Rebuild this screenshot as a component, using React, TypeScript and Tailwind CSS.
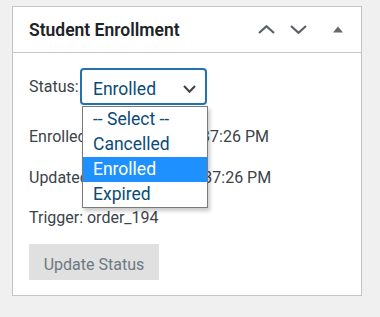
import React from "react";

function ChevronUp() {
  return (
    <svg width="17" height="9" viewBox="0 0 17 9" className="block">
      <polyline points="1,8 8.5,1.2 16,8" fill="none" stroke="#5c6166" strokeWidth="2.2" />
    </svg>
  );
}

function ChevronDown({ w = 17, h = 9, color = "#5c6166", sw = 2.2 }: { w?: number; h?: number; color?: string; sw?: number }) {
  return (
    <svg width={w} height={h} viewBox={`0 0 ${w} ${h}`} className="block">
      <polyline points={`1,1 ${w / 2},${h - 1.2} ${w - 1},1`} fill="none" stroke={color} strokeWidth={sw} />
    </svg>
  );
}

function Triangle() {
  return (
    <svg width="10" height="7" viewBox="0 0 10 7" className="block">
      <polygon points="0,6.5 5,0.5 10,6.5" fill="#646970" />
    </svg>
  );
}

const options = ["-- Select --", "Cancelled", "Enrolled", "Expired"];

export default function App() {
  return (
    <div className="w-[380px] h-[317px] bg-[#f0f0f1] pt-[6px] pl-[12px] font-['Roboto',sans-serif]">
      <div className="w-[350px] h-[290px] bg-white border border-[#c3c4c7] flex flex-col">
        <div className="h-[46px] border-b border-[#c3c4c7] flex items-center pl-[16px] pr-[18px]">
          <h2 className="text-[17.5px] leading-[24px] font-semibold text-[#1d2327] pt-[1px]">Student Enrollment</h2>
          <div className="ml-auto flex items-center">
            <ChevronUp />
            <div className="ml-[15px]">
              <ChevronDown />
            </div>
            <div className="ml-[26px] -mt-[1px]">
              <Triangle />
            </div>
          </div>
        </div>
        <div className="pl-[16px] text-[16px] leading-[24px] text-[#3c434a]">
          <div className="mt-[15px] flex items-center">
            <span className="w-[51px] shrink-0 whitespace-nowrap pt-[1px]">Status:</span>
            <div className="relative">
              <div className="w-[127px] h-[37px] rounded-[4px] border-2 border-[#2271b1] flex items-center pl-[11px] pr-[9px] pt-[5px] text-[17.5px] text-[#0a4b78]">
                <span>Enrolled</span>
                <div className="ml-auto">
                  <ChevronDown w={13} h={8} color="#3c434a" sw={2} />
                </div>
              </div>
              <div className="absolute left-[2px] top-[38px] w-[126px] border border-[#7a7a7a] bg-white shadow-[2px_3px_4px_rgba(0,0,0,0.22)] z-10">
                {options.map((o) => (
                  <div
                    key={o}
                    className={
                      "h-[25px] flex items-center pl-[10px] text-[17.5px] leading-[25px] " +
                      (o === "Enrolled" ? "bg-[#1e90ff] text-white" : "text-[#0a4b78]")
                    }
                  >
                    {o}
                  </div>
                ))}
              </div>
            </div>
          </div>
          <p className="mt-[20px] whitespace-nowrap">Enrolled: 2024-11-20 12:37:26 PM</p>
          <p className="mt-[17px] whitespace-nowrap">Updated: 2024-11-20 12:37:26 PM</p>
          <p className="mt-[16px]">Trigger: order_194</p>
          <button
            type="button"
            className="mt-[14px] w-[130px] h-[36px] bg-[#e0e0e0] text-[#6d7882] text-[16px] flex items-center justify-center pt-[6px] pb-0"
          >
            Update Status
          </button>
        </div>
      </div>
    </div>
  );
}
